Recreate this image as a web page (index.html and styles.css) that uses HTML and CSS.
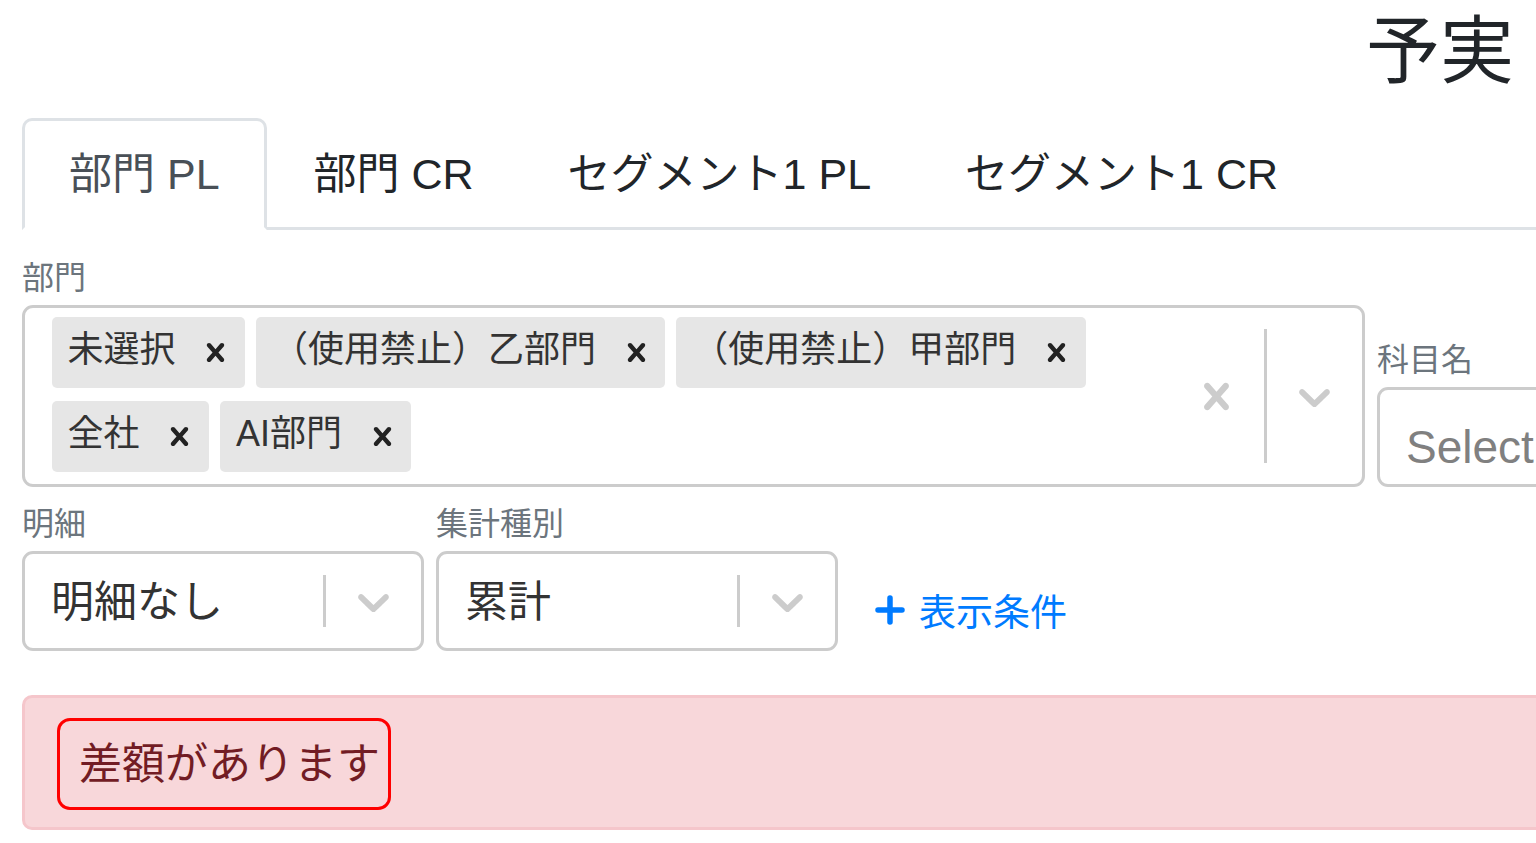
FILE: index.html
```html
<!DOCTYPE html>
<html lang="ja">
<head>
<meta charset="utf-8">
<title>予実</title>
<link rel="stylesheet" href="styles.css">
</head>
<body>
<div class="page">
  <header class="page-head">
    <h3 class="page-title">予実</h3>
  </header>
  <div class="content">
    <ul class="tabs">
      <li class="tab active">部門 PL</li>
      <li class="tab">部門 CR</li>
      <li class="tab">セグメント1 PL</li>
      <li class="tab">セグメント1 CR</li>
    </ul>

    <div class="filter-row first">
      <div class="field dept">
        <label class="field-label">部門</label>
        <div class="select multi">
          <div class="values">
            <div class="chip"><span class="chip-label">未選択</span><span class="chip-remove"><svg viewBox="0 0 20 20"><path d="M14.348 14.849c-0.469 0.469-1.229 0.469-1.697 0l-2.651-3.030-2.651 3.029c-0.469 0.469-1.229 0.469-1.697 0-0.469-0.469-0.469-1.229 0-1.697l2.758-3.15-2.759-3.152c-0.469-0.469-0.469-1.228 0-1.697s1.228-0.469 1.697 0l2.652 3.031 2.651-3.031c0.469-0.469 1.228-0.469 1.697 0s0.469 1.229 0 1.697l-2.758 3.152 2.758 3.15c0.469 0.469 0.469 1.229 0 1.698z"/></svg></span></div>
            <div class="chip"><span class="chip-label">（使用禁止）乙部門</span><span class="chip-remove"><svg viewBox="0 0 20 20"><path d="M14.348 14.849c-0.469 0.469-1.229 0.469-1.697 0l-2.651-3.030-2.651 3.029c-0.469 0.469-1.229 0.469-1.697 0-0.469-0.469-0.469-1.229 0-1.697l2.758-3.15-2.759-3.152c-0.469-0.469-0.469-1.228 0-1.697s1.228-0.469 1.697 0l2.652 3.031 2.651-3.031c0.469-0.469 1.228-0.469 1.697 0s0.469 1.229 0 1.697l-2.758 3.152 2.758 3.15c0.469 0.469 0.469 1.229 0 1.698z"/></svg></span></div>
            <div class="chip"><span class="chip-label">（使用禁止）甲部門</span><span class="chip-remove"><svg viewBox="0 0 20 20"><path d="M14.348 14.849c-0.469 0.469-1.229 0.469-1.697 0l-2.651-3.030-2.651 3.029c-0.469 0.469-1.229 0.469-1.697 0-0.469-0.469-0.469-1.229 0-1.697l2.758-3.15-2.759-3.152c-0.469-0.469-0.469-1.228 0-1.697s1.228-0.469 1.697 0l2.652 3.031 2.651-3.031c0.469-0.469 1.228-0.469 1.697 0s0.469 1.229 0 1.697l-2.758 3.152 2.758 3.15c0.469 0.469 0.469 1.229 0 1.698z"/></svg></span></div>
            <div class="chip"><span class="chip-label">全社</span><span class="chip-remove"><svg viewBox="0 0 20 20"><path d="M14.348 14.849c-0.469 0.469-1.229 0.469-1.697 0l-2.651-3.030-2.651 3.029c-0.469 0.469-1.229 0.469-1.697 0-0.469-0.469-0.469-1.229 0-1.697l2.758-3.15-2.759-3.152c-0.469-0.469-0.469-1.228 0-1.697s1.228-0.469 1.697 0l2.652 3.031 2.651-3.031c0.469-0.469 1.228-0.469 1.697 0s0.469 1.229 0 1.697l-2.758 3.152 2.758 3.15c0.469 0.469 0.469 1.229 0 1.698z"/></svg></span></div>
            <div class="chip"><span class="chip-label">AI部門</span><span class="chip-remove"><svg viewBox="0 0 20 20"><path d="M14.348 14.849c-0.469 0.469-1.229 0.469-1.697 0l-2.651-3.030-2.651 3.029c-0.469 0.469-1.229 0.469-1.697 0-0.469-0.469-0.469-1.229 0-1.697l2.758-3.15-2.759-3.152c-0.469-0.469-0.469-1.228 0-1.697s1.228-0.469 1.697 0l2.652 3.031 2.651-3.031c0.469-0.469 1.228-0.469 1.697 0s0.469 1.229 0 1.697l-2.758 3.152 2.758 3.15c0.469 0.469 0.469 1.229 0 1.698z"/></svg></span></div>
          </div>
          <div class="indicators">
            <div class="indicator"><svg viewBox="0 0 20 20"><path d="M14.348 14.849c-0.469 0.469-1.229 0.469-1.697 0l-2.651-3.030-2.651 3.029c-0.469 0.469-1.229 0.469-1.697 0-0.469-0.469-0.469-1.229 0-1.697l2.758-3.15-2.759-3.152c-0.469-0.469-0.469-1.228 0-1.697s1.228-0.469 1.697 0l2.652 3.031 2.651-3.031c0.469-0.469 1.228-0.469 1.697 0s0.469 1.229 0 1.697l-2.758 3.152 2.758 3.15c0.469 0.469 0.469 1.229 0 1.698z"/></svg></div>
            <span class="sep"></span>
            <div class="indicator"><svg viewBox="0 0 20 20"><path d="M4.516 7.548c0.436-0.446 1.043-0.481 1.576 0l3.908 3.747 3.908-3.747c0.533-0.481 1.141-0.446 1.574 0 0.436 0.445 0.408 1.197 0 1.615-0.406 0.418-4.695 4.502-4.695 4.502-0.217 0.223-0.502 0.335-0.787 0.335s-0.57-0.112-0.789-0.335c0 0-4.287-4.084-4.695-4.502s-0.436-1.17 0-1.615z"/></svg></div>
          </div>
        </div>
      </div>

      <div class="field account">
        <label class="field-label">科目名</label>
        <div class="select single">
          <div class="values"><span class="placeholder">Select</span></div>
        </div>
      </div>
    </div>

    <div class="filter-row second">
      <div class="field small">
        <label class="field-label">明細</label>
        <div class="select single">
          <div class="values"><span class="value">明細なし</span></div>
          <div class="indicators">
            <span class="sep"></span>
            <div class="indicator"><svg viewBox="0 0 20 20"><path d="M4.516 7.548c0.436-0.446 1.043-0.481 1.576 0l3.908 3.747 3.908-3.747c0.533-0.481 1.141-0.446 1.574 0 0.436 0.445 0.408 1.197 0 1.615-0.406 0.418-4.695 4.502-4.695 4.502-0.217 0.223-0.502 0.335-0.787 0.335s-0.57-0.112-0.789-0.335c0 0-4.287-4.084-4.695-4.502s-0.436-1.17 0-1.615z"/></svg></div>
          </div>
        </div>
      </div>
      <div class="field small">
        <label class="field-label">集計種別</label>
        <div class="select single">
          <div class="values"><span class="value">累計</span></div>
          <div class="indicators">
            <span class="sep"></span>
            <div class="indicator"><svg viewBox="0 0 20 20"><path d="M4.516 7.548c0.436-0.446 1.043-0.481 1.576 0l3.908 3.747 3.908-3.747c0.533-0.481 1.141-0.446 1.574 0 0.436 0.445 0.408 1.197 0 1.615-0.406 0.418-4.695 4.502-4.695 4.502-0.217 0.223-0.502 0.335-0.787 0.335s-0.57-0.112-0.789-0.335c0 0-4.287-4.084-4.695-4.502s-0.436-1.17 0-1.615z"/></svg></div>
          </div>
        </div>
      </div>
      <button class="add-btn" type="button">
        <svg class="plus" viewBox="0 0 30 30"><path d="M15 3V27M3 15H27"/></svg>
        <span>表示条件</span>
      </button>
    </div>

    <div class="alert">
      <div class="diff-box">差額があります</div>
    </div>
  </div>
</div>
</body>
</html>
```

FILE: styles.css
```css
html, body {
  margin: 0;
  padding: 0;
  background: #fff;
  overflow: hidden;
}

body {
  font-family: "Liberation Sans", "Noto Sans CJK JP", sans-serif;
  color: #212529;
}

.page {
  width: 1536px;
  box-sizing: border-box;
  padding: 0 22px;
}

.page-head {
  display: flex;
  justify-content: flex-end;
}

.page-title {
  margin: 0 0 14px;
  font-size: 74px;
  font-weight: 400;
  line-height: 104px;
  height: 104px;
  color: #212529;
}

.content {
  width: 1760px;
}

/* Tabs */
.tabs {
  display: flex;
  list-style: none;
  margin: 0;
  padding: 0;
  height: 109px;
  border-bottom: 3px solid #dee2e6;
}

.tab {
  box-sizing: border-box;
  height: 112px;
  margin-bottom: -3px;
  padding: 0 44px 8px;
  border: 3px solid transparent;
  border-radius: 10px 10px 0 0;
  display: flex;
  align-items: center;
  font-size: 43px;
  color: #212529;
  white-space: nowrap;
}

.tab.active {
  color: #495057;
  background: #fff;
  border-color: #dee2e6 #dee2e6 #fff;
}

/* Filter rows */
.filter-row {
  display: flex;
  align-items: flex-end;
  gap: 12px;
}

.filter-row.first {
  margin-top: 25px;
}

.filter-row.second {
  margin-top: 14px;
}

.field {
  flex-shrink: 0;
}

.field-label {
  display: block;
  height: 48px;
  margin-bottom: 2px;
  font-size: 32px;
  line-height: 46px;
  color: #6c757d;
}

.dept {
  width: 1343px;
}

.account,
.small {
  width: 402px;
}

.select {
  box-sizing: border-box;
  display: flex;
  background: #fff;
  border: 3px solid #ccc;
  border-radius: 11px;
}

.select.single {
  height: 100px;
}

.values {
  flex: 1;
  min-width: 0;
  display: flex;
  flex-wrap: wrap;
  align-items: center;
  align-content: flex-start;
  padding: 2.5px 21px 5.5px;
}

.single .values {
  align-content: center;
  padding: 5px 21px;
}

.value {
  margin: 0 5px 6px;
  font-size: 43px;
  color: #333;
  white-space: nowrap;
}

.placeholder {
  margin: 20px 5px 0;
  font-size: 46px;
  color: #808080;
}

/* Chips */
.chip {
  display: flex;
  height: 71px;
  margin: 6.5px 5.5px;
  background: #e6e6e6;
  border-radius: 5px;
}

.chip-label {
  padding: 0 11px 5px 16px;
  font-size: 36px;
  line-height: 66px;
  color: #333;
  white-space: nowrap;
}

.chip-remove {
  display: flex;
  align-items: center;
  padding: 0 10.7px;
  color: #222;
}

.chip-remove svg {
  width: 37px;
  height: 37px;
  fill: currentColor;
}

/* Indicators */
.indicators {
  display: flex;
  align-items: center;
  flex-shrink: 0;
}

.indicator {
  display: flex;
  padding: 21px;
  color: #ccc;
}

.indicator svg {
  width: 53px;
  height: 53px;
  fill: currentColor;
}

.sep {
  align-self: stretch;
  width: 3px;
  margin: 21px 0;
  background: #ccc;
}

/* Add condition button */
.add-btn {
  align-self: flex-end;
  height: 82px;
  display: flex;
  align-items: center;
  gap: 14px;
  padding: 0 0 0 25px;
  margin: 0;
  background: none;
  border: 0;
  font-family: inherit;
  font-size: 37px;
  color: #007bff;
}

.plus {
  width: 30px;
  height: 30px;
  fill: none;
  stroke: currentColor;
  stroke-width: 5.5;
  stroke-linecap: round;
}

/* Alert */
.alert {
  box-sizing: border-box;
  display: flex;
  align-items: flex-start;
  margin-top: 44px;
  padding: 20px 32px 17px;
  background: #f8d7da;
  border: 3px solid #f5c6cb;
  border-radius: 10px;
}

.diff-box {
  padding: 0 8px 0 19px;
  border: 3px solid #f00;
  border-radius: 13px;
  font-size: 43px;
  line-height: 86px;
  color: #721c24;
  white-space: nowrap;
}
```
